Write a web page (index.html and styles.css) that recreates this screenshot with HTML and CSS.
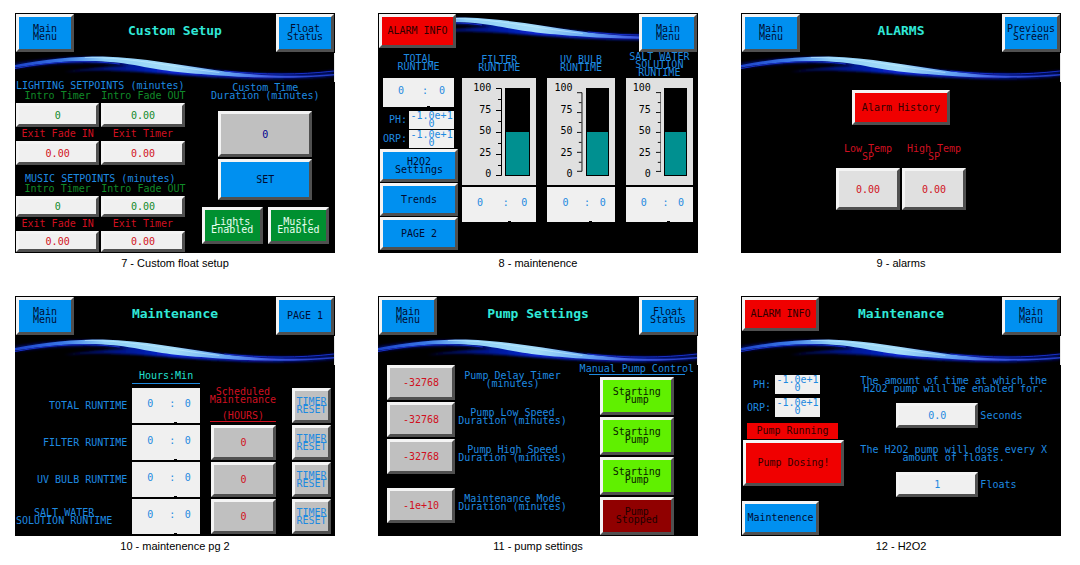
FILE: index.html
```html
<!DOCTYPE html>
<html lang="en">
<head>
<meta charset="utf-8">
<title>Float controller screens</title>
<link rel="stylesheet" href="styles.css">
</head>
<body>
<svg class="defs" width="0" height="0" aria-hidden="true">
  <defs>
    <linearGradient id="crest" x1="0" x2="320" y1="0" y2="0" gradientUnits="userSpaceOnUse">
      <stop offset="0" stop-color="#1c40c8"/><stop offset=".15" stop-color="#3a78e8"/>
      <stop offset=".28" stop-color="#90d0f8"/><stop offset=".5" stop-color="#a4dcf8"/>
      <stop offset=".65" stop-color="#68a8f4"/><stop offset=".8" stop-color="#3c58e0"/>
      <stop offset="1" stop-color="#2038c0"/>
    </linearGradient>
    <linearGradient id="haze" x1="0" x2="320" y1="0" y2="0" gradientUnits="userSpaceOnUse">
      <stop offset="0" stop-color="#0010a0" stop-opacity=".5"/><stop offset=".3" stop-color="#0418a0" stop-opacity=".8"/>
      <stop offset=".5" stop-color="#0828d8"/><stop offset=".75" stop-color="#0818a0"/>
      <stop offset="1" stop-color="#040c70" stop-opacity=".7"/>
    </linearGradient>
    <filter id="soft" x="-5%" y="-40%" width="110%" height="180%"><feGaussianBlur stdDeviation="2 1.2"/></filter>
    <filter id="edge" x="-5%" y="-20%" width="110%" height="140%"><feGaussianBlur stdDeviation=".5"/></filter>
    <g id="wave">
      <path filter="url(#soft)" fill="url(#haze)" d="M0 10C40 4 70 3 95 5C150 10 200 19 245 20C280 21 300 20 320 17V24C290 27 250 27 215 25C170 23 140 19 100 18C80 17 65 18 50 19C80 14 100 13 115 13C80 8 40 10 0 16Z"/>
      <path filter="url(#edge)" fill="url(#crest)" d="M0 12C30 6 60 3.500 88 3.500C130 5 165 12 200 17C235 22 275 25 320 21V22.500C280 26 240 25 205 22.500C170 20 150 18 125 13C100 8 65 4 0 14.500Z"/>
      <path filter="url(#edge)" fill="none" stroke="#1830c8" stroke-width="1" d="M0 15.500C40 8 75 7 105 11M210 18C250 22 285 22 320 18"/>
      <path fill="none" stroke="#c8f0ff" stroke-width=".8" opacity=".7" d="M70 4.500C115 4 150 13 205 19.500"/>
    </g>
  </defs>
</svg>

<main class="sheet">

<figure class="item">
  <section class="screen">
    <header class="bar"><button class="key nav">Main<br>Menu</button><h2 class="title">Custom Setup</h2><button class="key nav end">Float<br>Status</button></header>
    <svg class="wave" viewBox="0 0 320 29" preserveAspectRatio="none" aria-hidden="true"><use href="#wave"/></svg>
    <div class="setup">
      <div class="groups">
        <section>
          <h3 class="group-name">LIGHTING SETPOINTS (minutes)</h3>
          <div class="points tall">
            <label class="point green">Intro Timer<input class="key pale" value="0"></label>
            <label class="point green">Intro Fade OUT<input class="key pale" value="0.00"></label>
            <label class="point red">Exit Fade IN<input class="key pale" value="0.00"></label>
            <label class="point red">Exit Timer<input class="key pale" value="0.00"></label>
          </div>
        </section>
        <section>
          <h3 class="group-name">MUSIC SETPOINTS (minutes)</h3>
          <div class="points">
            <label class="point green">Intro Timer<input class="key pale" value="0"></label>
            <label class="point green">Intro Fade OUT<input class="key pale" value="0.00"></label>
            <label class="point red">Exit Fade IN<input class="key pale" value="0.00"></label>
            <label class="point red">Exit Timer<input class="key pale" value="0.00"></label>
          </div>
        </section>
      </div>
      <div class="custom">
        <label class="custom-name" for="custom-time">Custom Time<br>Duration (minutes)</label>
        <input class="key gray navy custom-value" id="custom-time" value="0">
        <button class="key custom-set">SET</button>
        <div class="toggles"><button class="key green-key">Lights<br>Enabled</button><button class="key green-key">Music<br>Enabled</button></div>
      </div>
    </div>
  </section>
  <figcaption>7 - Custom float setup</figcaption>
</figure>

<figure class="item">
  <section class="screen">
    <header class="bar strip"><button class="key alarm">ALARM INFO</button><svg class="wave-strip" viewBox="79 0 182 29" preserveAspectRatio="none" aria-hidden="true"><use href="#wave"/></svg><button class="key nav end">Main<br>Menu</button></header>
    <div class="runtimes">
      <div class="side">
        <div class="side-top">
          <p class="run-name two">TOTAL<br>RUNTIME</p>
          <output class="time short"><span>0</span><span>:</span><span>0</span></output>
          <div class="probes">
            <span>PH:</span><output class="probe">-1.0e+1<br>0</output>
            <span>ORP:</span><output class="probe">-1.0e+1<br>0</output>
          </div>
        </div>
        <div class="side-keys"><button class="key">H2O2<br>Settings</button><button class="key">Trends</button><button class="key">PAGE 2</button></div>
      </div>
      <div class="tank">
        <p class="run-name cut">FILTER<br>RUNTIME</p>
        <div class="gauge"><div class="scale"><span>100</span><span>75</span><span>50</span><span>25</span><span>0</span></div><svg class="ticks" viewBox="0 0 6 88" aria-hidden="true"><path d="M0 .5H5.500V87.500H0M2 11.500H5M0 22.500H5M2 33.500H5M0 44.500H5M2 55.500H5M0 66.500H5M2 77.500H5"/></svg><div class="tube"><div class="level" style="height:50%"></div></div></div>
        <output class="time"><span>0</span><span>:</span><span>0</span></output>
      </div>
      <div class="tank">
        <p class="run-name cut">UV BULB<br>RUNTIME</p>
        <div class="gauge"><div class="scale"><span>100</span><span>75</span><span>50</span><span>25</span><span>0</span></div><svg class="ticks" viewBox="0 0 6 88" aria-hidden="true"><path d="M0 .5H5.500V87.500H0M2 11.500H5M0 22.500H5M2 33.500H5M0 44.500H5M2 55.500H5M0 66.500H5M2 77.500H5"/></svg><div class="tube"><div class="level" style="height:50%"></div></div></div>
        <output class="time"><span>0</span><span>:</span><span>0</span></output>
      </div>
      <div class="tank">
        <p class="run-name">SALT WATER<br>SOLUTION<br>RUNTIME</p>
        <div class="gauge"><div class="scale"><span>100</span><span>75</span><span>50</span><span>25</span><span>0</span></div><svg class="ticks" viewBox="0 0 6 88" aria-hidden="true"><path d="M0 .5H5.500V87.500H0M2 11.500H5M0 22.500H5M2 33.500H5M0 44.500H5M2 55.500H5M0 66.500H5M2 77.500H5"/></svg><div class="tube"><div class="level" style="height:50%"></div></div></div>
        <output class="time"><span>0</span><span>:</span><span>0</span></output>
      </div>
    </div>
  </section>
  <figcaption>8 - maintenence</figcaption>
</figure>

<figure class="item">
  <section class="screen">
    <header class="bar"><button class="key nav">Main<br>Menu</button><h2 class="title">ALARMS</h2><button class="key nav end">Previous<br>Screen</button></header>
    <svg class="wave" viewBox="0 0 320 29" preserveAspectRatio="none" aria-hidden="true"><use href="#wave"/></svg>
    <div class="alarms">
      <button class="key red-key history">Alarm History</button>
      <div class="limits">
        <label class="red">Low Temp<br>SP<input class="key light" value="0.00"></label>
        <label class="red">High Temp<br>SP<input class="key light" value="0.00"></label>
      </div>
    </div>
  </section>
  <figcaption>9 - alarms</figcaption>
</figure>

<figure class="item">
  <section class="screen">
    <header class="bar"><button class="key nav">Main<br>Menu</button><h2 class="title">Maintenance</h2><button class="key nav end">PAGE 1</button></header>
    <svg class="wave" viewBox="0 0 320 29" preserveAspectRatio="none" aria-hidden="true"><use href="#wave"/></svg>
    <div class="service">
      <p class="hours-head">Hours:Min</p>
      <p class="row-name">TOTAL RUNTIME</p><output class="time"><span>0</span><span>:</span><span>0</span></output>
      <p class="sched red"><span class="sched-text">Scheduled<br>Maintenance<br><br>(HOURS)</span></p><button class="key gray reset">TIMER<br>RESET</button>
      <label class="row-name" for="filter-hours">FILTER RUNTIME</label><output class="time"><span>0</span><span>:</span><span>0</span></output>
      <input class="key gray red hours" id="filter-hours" value="0"><button class="key gray reset">TIMER<br>RESET</button>
      <label class="row-name" for="uv-hours">UV BULB RUNTIME</label><output class="time"><span>0</span><span>:</span><span>0</span></output>
      <input class="key gray red hours" id="uv-hours" value="0"><button class="key gray reset">TIMER<br>RESET</button>
      <label class="row-name mid" for="salt-hours">SALT WATER<br>SOLUTION RUNTIME</label><output class="time"><span>0</span><span>:</span><span>0</span></output>
      <input class="key gray red hours" id="salt-hours" value="0"><button class="key gray reset">TIMER<br>RESET</button>
    </div>
  </section>
  <figcaption>10 - maintenence pg 2</figcaption>
</figure>

<figure class="item">
  <section class="screen">
    <header class="bar"><button class="key nav">Main<br>Menu</button><h2 class="title">Pump Settings</h2><button class="key nav end">Float<br>Status</button></header>
    <svg class="wave" viewBox="0 0 320 29" preserveAspectRatio="none" aria-hidden="true"><use href="#wave"/></svg>
    <div class="pumps">
      <div class="pump-times">
        <label class="pump-time"><input class="key gray red" value="-32768"><span>Pump Delay Timer<br>(minutes)</span></label>
        <label class="pump-time"><input class="key gray red" value="-32768"><span>Pump Low Speed<br>Duration (minutes)</span></label>
        <label class="pump-time"><input class="key gray red" value="-32768"><span>Pump High Speed<br>Duration (minutes)</span></label>
        <label class="pump-time apart"><input class="key gray red" value="-1e+10"><span>Maintenance Mode<br>Duration (minutes)</span></label>
      </div>
      <div class="manual">
        <h3 class="manual-name">Manual Pump Control</h3>
        <button class="key lime">Starting<br>Pump</button><button class="key lime">Starting<br>Pump</button><button class="key lime">Starting<br>Pump</button><button class="key stopped">Pump<br>Stopped</button>
      </div>
    </div>
  </section>
  <figcaption>11 - pump settings</figcaption>
</figure>

<figure class="item">
  <section class="screen">
    <header class="bar"><button class="key alarm">ALARM INFO</button><h2 class="title">Maintenance</h2><button class="key nav end">Main<br>Menu</button></header>
    <svg class="wave" viewBox="0 0 320 29" preserveAspectRatio="none" aria-hidden="true"><use href="#wave"/></svg>
    <div class="dosing">
      <div class="status">
        <div class="probes wide">
          <span>PH:</span><output class="probe">-1.0e+1<br>0</output>
          <span>ORP:</span><output class="probe">-1.0e+1<br>0</output>
        </div>
        <p class="running">Pump Running</p>
        <button class="key red-key dose">Pump Dosing!</button>
        <button class="key back">Maintenence</button>
      </div>
      <div class="doses">
        <label for="dose-time">The amount of time at which the<br>H2O2 pump will be enabled for.</label>
        <div class="dose-row"><input class="key pale blue" id="dose-time" value="0.0"><span>Seconds</span></div>
        <label for="dose-floats">The H2O2 pump will dose every X<br>amount of floats.</label>
        <div class="dose-row"><input class="key pale blue" id="dose-floats" value="1"><span>Floats</span></div>
      </div>
    </div>
  </section>
  <figcaption>12 - H2O2</figcaption>
</figure>

</main>
</body>
</html>
```
FILE: styles.css
```css
* { box-sizing: border-box; }
body { margin: 0; background: #fff; }
h2, h3, p, figure { margin: 0; font-weight: normal; }
.defs { position: absolute; }

.sheet {
  display: grid;
  grid-template-columns: repeat(3, minmax(0, 1fr));
  gap: 23px 43px;
  padding: 13px 19px 0 15px;
}
figcaption {
  font: 11px/20px "Liberation Sans", Arial, sans-serif;
  color: #000;
  text-align: center;
}
.screen {
  display: flex;
  flex-direction: column;
  min-height: 240px;
  background: #000;
  color: #1e8ae0;
  font: 10px/8px "DejaVu Sans Mono", monospace;
  white-space: nowrap;
}

/* Bevelled keys and entry fields */
.key {
  display: block;
  min-width: 0;
  margin: 0;
  padding: 0;
  border: 3px solid;
  border-color: #f4f4f4 #505050 #505050 #f4f4f4;
  border-radius: 0;
  background: #0090f0;
  color: #000c30;
  font: inherit;
  text-align: center;
  white-space: nowrap;
}
.pale { background: #f0f0f0; }
.light { background: #e0e0e0; }
.gray { background: #c0c0c0; }
.green-key { background: #009030; color: #e8fff0; }
.red-key, .alarm { background: #f00000; color: #300000; }
.lime { background: #60f000; color: #082000; }
.stopped { background: #900000; color: #200000; }
.green { color: #108a28; }
.red { color: #d01020; }
.navy { color: #000090; }
.blue { color: #1e8ae0; }

/* Screen header */
.bar {
  display: grid;
  grid-template-columns: 1fr auto 1fr;
  align-items: start;
  height: 40px;
  padding: 1px 1px 0;
}
.strip { grid-template-columns: auto 1fr auto; }
.nav { width: 58px; height: 38px; }
.end { justify-self: end; }
.alarm { width: 77px; height: 34px; }
.title {
  font: bold 13px/34px "DejaVu Sans Mono", monospace;
  color: #30e8d8;
}
.wave { display: block; width: 100%; height: 29px; border-right: 1px solid #e8e8e8; }
.wave-strip { width: 100%; height: 29px; }

/* Custom setup */
.setup {
  display: grid;
  grid-template-columns: 165fr 131fr;
  gap: 17px;
  padding: 0 6px 1px 1px;
}
.groups { display: flex; flex-direction: column; gap: 10px; }
.group-name { font: inherit; text-align: center; }
.points {
  display: grid;
  grid-template-columns: repeat(2, minmax(0, 1fr));
  gap: 1px 2px;
}
.point { display: flex; flex-direction: column; gap: 1px; line-height: 12px; text-align: center; }
.point .key { width: 100%; height: 21px; color: inherit; }
.tall .key { height: 24px; }
.custom { display: flex; flex-direction: column; align-items: center; padding-top: 2px; }
.custom-name { text-align: center; }
.custom-value { width: 94px; height: 46px; margin-top: 11px; }
.custom-set { width: 94px; height: 41px; margin-top: 2px; }
.toggles { display: flex; gap: 5px; align-self: stretch; margin-top: 7px; }
.toggles .key { flex: 1; height: 37px; }

/* Runtime gauges */
.runtimes {
  display: grid;
  grid-template-columns: 77fr 70fr 70fr 70fr;
  column-gap: 11px;
  padding: 0 5px 1px 2px;
}
.runtimes .tank:nth-child(2) { margin-left: -7px; }
.run-name { height: 25px; text-align: center; }
.two { padding-top: 2px; }
.cut { padding-top: 3px; }
.side { display: flex; flex-direction: column; gap: 1px; }
.side-top { padding: 0 4px 0 3px; }
.time {
  position: relative;
  display: grid;
  grid-template-columns: 5fr 6fr 3fr;
  align-items: center;
  height: 35px;
  padding: 0 9px 3px 15px;
  background: #f0f0f0;
  color: #1e8ae0;
}
.time span:nth-child(2) { text-align: center; }
.time span:last-child { text-align: right; }
.time::after {
  content: "";
  position: absolute;
  left: 62%;
  bottom: 0;
  width: 3px;
  height: 1px;
  background: #000;
}
.short { height: 29px; }
.probes {
  display: grid;
  grid-template-columns: 1fr 45px;
  align-items: center;
  gap: 1px 2px;
  margin-top: 4px;
  text-align: right;
}
.probe { height: 18px; padding-top: 1px; background: #f0f0f0; color: #1e8ae0; text-align: center; }
.side-keys { display: flex; flex-direction: column; gap: 1px; }
.side-keys .key { height: 33px; }
.tank { min-width: 0; }
.gauge {
  display: flex;
  height: 107px;
  padding: 10px 6px 9px 7px;
  background: #e0e0e0;
}
.gauge + .time { margin-top: 2px; }
.scale {
  display: flex;
  flex: 1;
  flex-direction: column;
  justify-content: space-between;
  height: 94px;
  margin-top: -4px;
  color: #000;
  text-align: right;
}
.ticks { width: 6px; height: 88px; margin: 0 3px 0 5px; fill: none; stroke: #000; }
.tube {
  display: flex;
  flex-direction: column;
  justify-content: flex-end;
  width: 25px;
  height: 88px;
  padding: 1px;
  background: #000;
}
.level { background: #009090; }

/* Alarms */
.alarms { display: flex; flex-direction: column; align-items: center; padding-top: 8px; }
.history { width: 98px; height: 35px; }
.limits { display: flex; gap: 2px; margin-top: 20px; text-align: center; }
.limits .key { width: 64px; height: 42px; margin-top: 7px; color: inherit; }

/* Maintenance timers */
.service {
  display: grid;
  grid-template-columns: 109fr 70fr 69fr 41fr;
  grid-template-rows: 21px repeat(4, 35px);
  gap: 2px 0;
  padding: 0 4px 2px 1px;
}
.hours-head {
  grid-column: 2;
  margin-bottom: 2px;
  padding-top: 7px;
  border-bottom: 1px solid #1e8ae0;
  color: #20e0d0;
  text-align: center;
}
.row-name { grid-column: 1; align-self: center; padding-right: 5px; text-align: right; }
.mid { text-align: center; padding-right: 20px; }
.service { column-gap: 0; }
.sched { margin: 0 0 1px 10px; border-bottom: 1px solid; text-align: center; }
.sched-text { display: block; height: 33px; }
.hours { margin-left: 11px; }
.reset { margin-left: 16px; color: #1e8ae0; }
.service { grid-template-columns: 109fr 70fr 79fr 57fr; }

/* Pump settings */
.pumps { display: flex; justify-content: space-between; padding: 0 4px 1px 9px; }
.pump-times { display: flex; flex-direction: column; gap: 2px; }
.pump-time { display: flex; align-items: center; gap: 3px; text-align: center; }
.pump-time .key { width: 68px; height: 35px; }
.pump-time span { width: 109px; padding-bottom: 5px; }
.apart { margin-top: 12px; }
.manual { display: flex; flex-direction: column; align-items: center; gap: 2px; }
.manual .key { width: 74px; height: 38px; }
.manual-name { height: 10px; font: inherit; background: linear-gradient(#1e8ae0, #1e8ae0) bottom / 96px 1px no-repeat; }

/* Dosing */
.dosing { display: flex; justify-content: space-between; flex: 1; padding: 10px 14px 1px 1px; }
.status { display: flex; flex-direction: column; width: 102px; }
.wide { width: 78px; gap: 4px; margin: 0; grid-template-columns: 1fr 45px; }
.wide .probe { height: 19px; }
.running {
  margin: 6px 6px 1px 5px;
  background: #f00000;
  color: #300000;
  line-height: 16px;
  text-align: center;
}
.dose { height: 46px; margin-left: 1px; }
.back { width: 77px; height: 34px; margin-top: auto; }
.doses { display: flex; flex-direction: column; align-items: center; padding-top: 2px; }
.doses label { text-align: center; }
.dose-row { display: flex; align-items: center; align-self: stretch; gap: 2px; margin: 10px 0 18px 36px; }
.dose-row .key { width: 82px; height: 25px; }
```
